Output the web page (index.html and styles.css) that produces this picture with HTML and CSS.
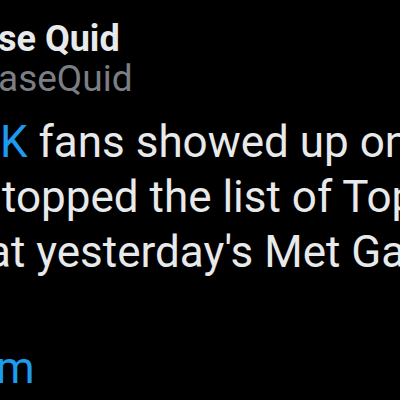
FILE: index.html
```html
<!DOCTYPE html>
<html lang="en">
<head>
<meta charset="utf-8">
<title>Tweet</title>
<link rel="stylesheet" href="styles.css">
</head>
<body>
  <header class="author">
    <div class="row name"><span class="pre">The Cha</span><span class="vis vis-name">se Quid</span></div>
    <div class="row handle"><span class="pre">@Ch</span><span class="vis vis-handle">aseQuid</span></div>
  </header>
  <div class="tweet">
    <div class="row"><span class="pre"><span class="tag">#BLACKPIN</span></span><span class="vis vis-1"><span class="tag">K</span> fans showed up on</span></div>
    <div class="row"><span class="pre">fans and </span><span class="vis vis-2">topped the list of Top</span></div>
    <div class="row"><span class="pre">th</span><span class="vis vis-3">at yesterday's Met Gala</span></div>
    <div class="row link"><span class="pre">instagra</span><span class="vis vis-4">m</span></div>
  </div>
</body>
</html>
```
FILE: styles.css
```css
html, body {
  margin: 0;
  padding: 0;
  background: #000;
}
body {
  width: 400px;
  height: 400px;
  overflow: hidden;
  padding-top: 17px;
  box-sizing: border-box;
  font-family: Roboto, "Noto Sans", sans-serif;
  color: #e7e9ea;
}
.row {
  display: flex;
  white-space: pre;
}
.pre {
  flex: 0 0 0;
  min-width: 0;
  width: 0;
  display: flex;
  justify-content: flex-end;
  white-space: pre;
}
.vis {
  flex: none;
}
.name {
  font-size: 36px;
  font-weight: 700;
  line-height: 44px;
}
.vis-name { margin-left: -2px; }
.handle {
  font-size: 37px;
  line-height: 35px;
  color: #7b7f84;
}
.vis-handle { margin-left: -2px; }
.tweet {
  margin-top: 19px;
  font-size: 44px;
  line-height: 55px;
}
.tag { color: #1d9bf0; }
.vis-1 { margin-left: 0; }
.vis-2 { margin-left: 2px; }
.vis-3 { margin-left: -13px; }
.link {
  margin-top: 61px;
  color: #1d9bf0;
}
.vis-4 { margin-left: -4px; }
```
